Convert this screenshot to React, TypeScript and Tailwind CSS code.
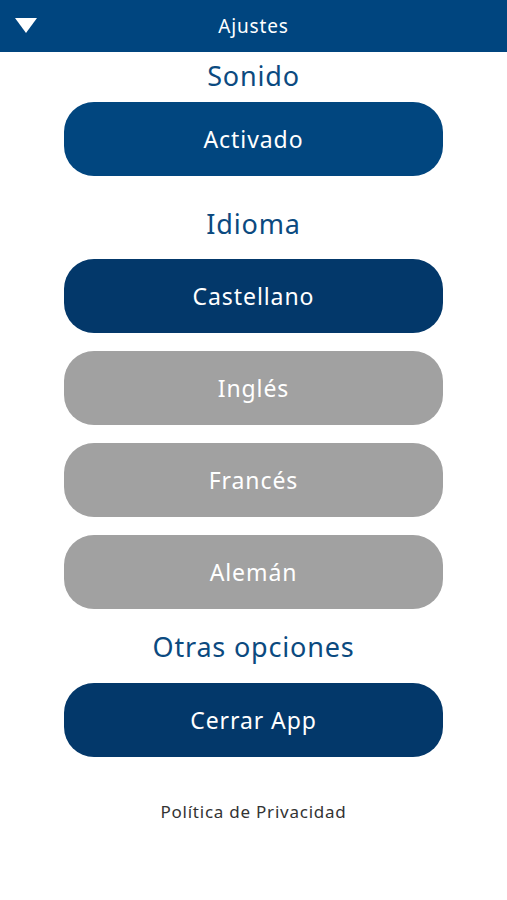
export default function App() {
  const languages = [
    { name: "Castellano", active: true },
    { name: "Inglés", active: false },
    { name: "Francés", active: false },
    { name: "Alemán", active: false },
  ];

  return (
    <div className="min-h-screen w-full bg-white font-['Noto_Sans','Lato',sans-serif]">
      {/* Header */}
      <div className="relative flex h-[52px] items-center justify-center bg-[#00457f]">
        <svg className="absolute left-[15px] top-[18px]" width="22" height="15" viewBox="0 0 22 15">
          <polygon points="0,0 22,0 11,15" fill="#ffffff" />
        </svg>
        <span className="text-[19px] tracking-[0.045em] text-white">Ajustes</span>
      </div>

      <div className="flex flex-col items-center">
        <h2 className="mt-[9px] mb-[11px] h-[30px] text-[27px] leading-[30px] tracking-[0.03em] text-[#0b4a80]">Sonido</h2>
        <button className="h-[74px] w-[379px] rounded-[30px] bg-[#01467f] text-[23px] tracking-[0.04em] text-white">
          Activado
        </button>

        <h2 className="mt-[33px] mb-[20px] h-[30px] text-[27px] leading-[30px] tracking-[0.03em] text-[#0b4a80]">Idioma</h2>
        <div className="flex flex-col gap-[18px]">
          {languages.map((lang) => (
            <button
              key={lang.name}
              className={
                lang.active
                  ? "h-[74px] w-[379px] rounded-[30px] bg-[#03386a] text-[23px] tracking-[0.04em] text-white"
                  : "h-[74px] w-[379px] rounded-[30px] bg-[#a1a1a1] text-[23px] tracking-[0.04em] text-white"
              }
            >
              {lang.name}
            </button>
          ))}
        </div>

        <h2 className="mt-[23px] mb-[21px] h-[30px] text-[27px] leading-[30px] tracking-[0.03em] text-[#0b4a80]">Otras opciones</h2>
        <button className="h-[74px] w-[379px] rounded-[30px] bg-[#03386a] text-[23px] tracking-[0.04em] text-white">
          Cerrar App
        </button>

        <p className="mt-[45px] h-[20px] text-[17px] leading-[20px] tracking-[0.045em] text-[#333333]">Política de Privacidad</p>
      </div>
    </div>
  );
}
